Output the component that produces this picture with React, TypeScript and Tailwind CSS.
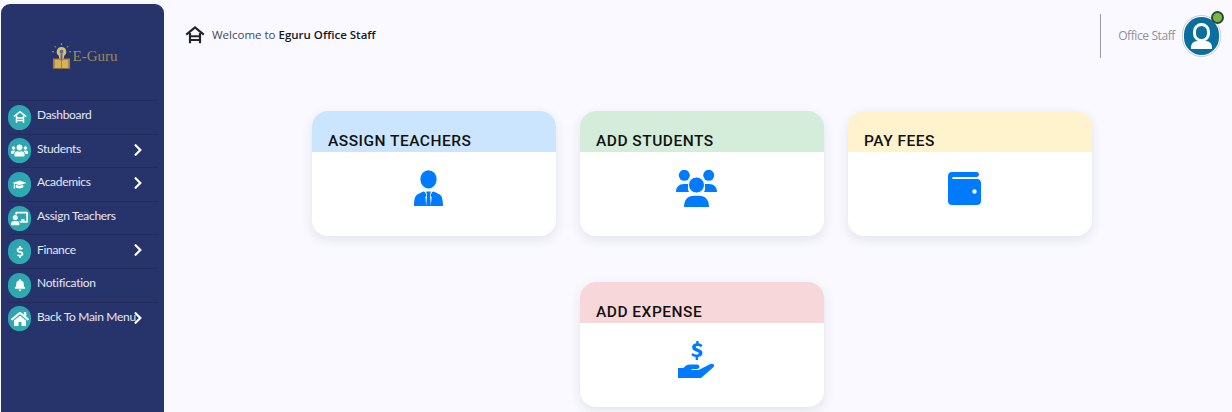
import { ReactNode } from "react";
import { FaBell, FaChalkboardTeacher, FaChevronRight, FaDollarSign, FaGraduationCap, FaHome, FaUsers } from "react-icons/fa";

function PagodaIcon({ className = "" }: { className?: string }) {
    return (
        <svg viewBox="0 0 24 24" className={className} fill="none" stroke="currentColor" strokeWidth="2.6">
            <path d="M1.500 11.500 12 3l10.500 8.500" strokeLinejoin="miter" />
            <path d="M6 9.500V22M18 9.500V22M6 13.500h12M6 18h12" />
        </svg>
    );
}

function UserTieIcon() {
    return (
        <svg viewBox="0 0 30 38" className="w-[29px] h-[37px]" fill="#007bff">
            <ellipse cx="15" cy="9.500" rx="8.400" ry="9.500" />
            <path d="M9.500 22 3 25.500C1 27 0 31 0 37h12.600l-.8-9 1.200-2-1.800-3.500zM20.500 22l6.500 3.500c2 1.500 3 5.500 3 11.500h-12.600l.8-9-1.200-2 1.800-3.500z" />
            <path d="M12.500 22h5l-1 3.500 1 11.500h-5l1-11.500z" />
        </svg>
    );
}

function GroupIcon() {
    return (
        <svg viewBox="0 0 41 37" className="w-[41px] h-[37px]" fill="#007bff">
            <circle cx="8.300" cy="5.300" r="5.500" />
            <circle cx="32.700" cy="5.300" r="5.500" />
            <path d="M0 22c0-5 3-8 8-8h5c-1.500 2.500-1.500 5.500 0 8zM41 22c0-5-3-8-8-8h-5c1.500 2.500 1.500 5.500 0 8z" />
            <circle cx="20.500" cy="15" r="8" stroke="#fff" strokeWidth="1" />
            <path d="M8 37c0-7.500 4-11.300 10-11.300h5c6 0 10 3.800 10 11.300z" />
        </svg>
    );
}

function WalletIcon() {
    return (
        <svg viewBox="0 0 33 33" className="w-[33px] h-[33px] mt-[2px]" fill="#007bff">
            <path fillRule="evenodd" d="M4 0h24.500c1.500 0 2.500 1 2.500 2.300 0 1.500-1 2.700-2.500 2.700H5.500c-.8 0-1.300.4-1.300 1s.5 1 1.300 1H29c2.400 0 4 1.600 4 4V29c0 2.400-1.600 4-4 4H4c-2.400 0-4-1.600-4-4V4c0-2.400 1.600-4 4-4zm22.500 17.300a2.200 2.200 0 1 0 0 4.400 2.200 2.200 0 0 0 0-4.400z" />
        </svg>
    );
}

function HandIcon() {
    return (
        <svg viewBox="0 0 37 37" className="w-[37px] h-[37px]" fill="#007bff">
            <path d="M0 27h5.500c2-2.500 4-3.500 6.500-3.500h7c1.500 0 2.500 1 2.500 2.200s-1 2.300-2.500 2.300h-5.500v1h7l12-6c1.200-.7 2.700-.3 3.300.6.600 1 .3 2-.7 2.800L23 37H0z" />
            <path d="M18.200 0h2.400v2.300c1.600.2 3 .9 3.900 1.700l-1.500 2.200c-1-.8-2.100-1.300-3.400-1.300-1.200 0-1.800.4-1.800 1.100 0 .8.900 1.100 2.500 1.700 2.300.8 4.200 1.800 4.200 4.300 0 2.200-1.500 3.700-4.400 4.100V19h-2.400v-2.900c-1.800-.2-3.400-1-4.500-2l1.600-2.200c1.200 1 2.500 1.600 3.900 1.600 1.300 0 2-.5 2-1.300 0-.9-.9-1.200-2.500-1.800-2.300-.8-4.100-1.800-4.100-4.200 0-2.100 1.500-3.600 4.100-4z" />
        </svg>
    );
}

function LogoMark() {
    return (
        <svg viewBox="0 0 20 28" className="w-[19px] h-[27px]">
            <path d="M10 4a5 5 0 0 0-3 9l1 5h4l1-5a5 5 0 0 0-3-9z" fill="#d9c06e" />
            <circle cx="10" cy="9" r="2" fill="#5a6a94" />
            <path d="M9 11h2v8H9z" fill="#5a6a94" />
            <path d="M1 16h7l2 2 2-2h7v11h-18z" fill="#a87f35" />
            <path d="M3 17.500h5.500l1 1.500v7H3zM17 17.500h-5.500l-1 1.500v7H17z" fill="#d4b25a" />
            <path d="M10 0v2M3 3l1 1.500M17 3l-1 1.500M0 9h2M18 9h2" stroke="#b8a870" strokeWidth="1" />
        </svg>
    );
}

type NavItem = { label: string; icon: ReactNode; arrow?: boolean };

const navItems: NavItem[] = [
    { label: "Dashboard", icon: <PagodaIcon className="w-3.5 h-3.5" /> },
    { label: "Students", icon: <FaUsers className="text-[17px]" />, arrow: true },
    { label: "Academics", icon: <FaGraduationCap className="text-[13px]" />, arrow: true },
    { label: "Assign Teachers", icon: <FaChalkboardTeacher className="text-[17px]" /> },
    { label: "Finance", icon: <FaDollarSign className="text-[12px]" />, arrow: true },
    { label: "Notification", icon: <FaBell className="text-[12px]" /> },
    { label: "Back To Main Menu", icon: <FaHome className="text-[18px]" />, arrow: true },
];

function Sidebar() {
    return (
        <aside className="w-[163px] h-[408px] mt-1 ml-px shrink-0 rounded-t-[9px] bg-[#27336b] flex flex-col">
            <div className="h-[96px] flex items-center justify-center gap-[2px] pl-[4px] pt-[9px]">
                <LogoMark />
                <span className="text-[15px] text-[#9a8a58] font-['Liberation_Serif',serif]">E-Guru</span>
            </div>
            <ul className="pl-[7px] pr-[6px]">
                {navItems.map((item) => (
                    <li key={item.label} className="relative h-[33.6px] border-t border-[#212b5c] flex items-center">
                        <span className="w-[23px] h-[25px] rounded-full bg-gradient-to-br from-[#2f9fb4] to-[#2bb0ae] text-white flex items-center justify-center shrink-0">
                            {item.icon}
                        </span>
                        <span className="ml-[6px] mb-[4px] text-[12px] tracking-[-0.3px] whitespace-nowrap text-[#e6e8f2] font-['Lato',sans-serif]">
                            {item.label}
                        </span>
                        {item.arrow && <FaChevronRight className="absolute left-[123px] top-[8px] text-[14px] text-white" />}
                    </li>
                ))}
            </ul>
        </aside>
    );
}

function Header() {
    return (
        <header className="h-[53px] mt-1 flex items-center justify-between">
            <div className="flex items-center gap-[7px] pl-[21px] pt-[9px]">
                <PagodaIcon className="w-[20px] h-[20px] text-[#22242c]" />
                <p className="text-[11.5px] text-[#444754] font-['Open_Sans',sans-serif]">
                    Welcome to <span className="font-semibold text-[#15171f]">Eguru Office Staff</span>
                </p>
            </div>
            <div className="flex items-center h-[44px] mt-[10px] pr-[11px]">
                <div className="h-full w-px bg-[#9a9aa2] mr-[17px]" />
                <span className="text-[12px] tracking-[-0.4px] text-[#8f919c] font-['Open_Sans',sans-serif] mr-[7px]">Office Staff</span>
                <div className="relative w-[39px] h-[42px]">
                    <div className="w-full h-full rounded-full border border-[#c9ccd1] p-px bg-white">
                        <div className="w-full h-full rounded-full bg-[#0a6f9f] overflow-hidden flex flex-col items-center justify-end">
                            <span className="w-[17px] h-[19px] rounded-full bg-[#0a6f9f] border-[3px] border-white" />
                            <span className="w-[21px] h-[8px] -mt-[1px] rounded-t-[6px] bg-white mb-[6px]" />
                        </div>
                    </div>
                    <span className="absolute -top-[4px] -right-[3px] w-[13px] h-[13px] rounded-full bg-[#7ab648] border-2 border-[#2f4a36]" />
                </div>
            </div>
        </header>
    );
}

function ActionCard({ title, tint, icon }: { title: string; tint: string; icon: ReactNode }) {
    return (
        <div className="w-[244px] h-[125px] rounded-[16px] bg-white overflow-hidden shadow-[0_4px_12px_rgba(40,40,70,0.1)] flex flex-col">
            <div className={`h-[41px] shrink-0 px-[16px] flex items-end ${tint}`}>
                <h2 className="text-[15.5px] leading-[21px] font-medium tracking-[0.5px] text-[#111] font-['Roboto',sans-serif]">{title}</h2>
            </div>
            <div className="flex justify-center items-start pt-[18px] pr-[12px]">{icon}</div>
        </div>
    );
}

export default function App() {
    return (
        <div className="w-[1232px] h-[412px] overflow-hidden flex bg-[#f9f9ff]">
            <Sidebar />
            <main className="flex-1 min-w-0">
                <Header />
                <div className="w-[780px] ml-[148px] mt-[54px] flex flex-wrap justify-center gap-x-6 gap-y-[46px]">
                    <ActionCard title="ASSIGN TEACHERS" tint="bg-[#cce5ff]" icon={<UserTieIcon />} />
                    <ActionCard title="ADD STUDENTS" tint="bg-[#d4edda]" icon={<GroupIcon />} />
                    <ActionCard title="PAY FEES" tint="bg-[#fff3cd]" icon={<WalletIcon />} />
                    <ActionCard title="ADD EXPENSE" tint="bg-[#f8d7da]" icon={<HandIcon />} />
                </div>
            </main>
        </div>
    );
}
